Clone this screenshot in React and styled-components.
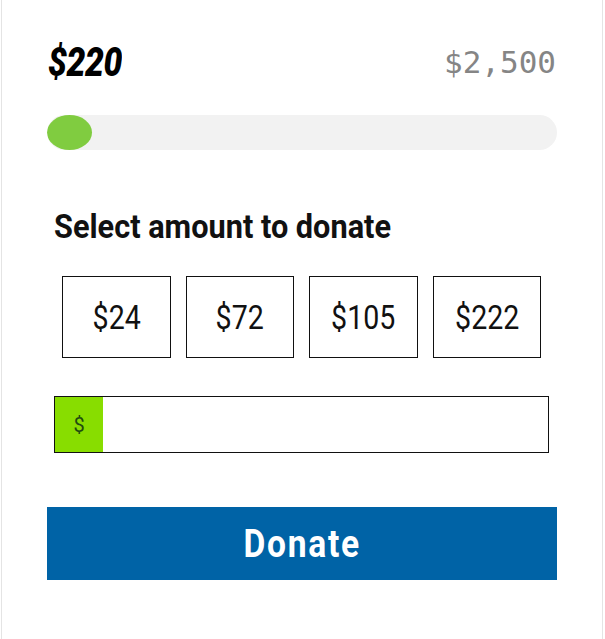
import styled, { createGlobalStyle } from 'styled-components';

const GlobalStyle = createGlobalStyle`
    body{
        margin: 0;
        background: #ffffff;
        font-family: Roboto, "Liberation Sans", sans-serif;
    }
`;

const amounts = [24, 72, 105, 222];

function App() {
    const raised = 220;
    const goal = 2500;
    const pct = Math.max((raised / goal) * 100, 8.8);
    return(
        <>
            <GlobalStyle/>
            <Card>
                <Totals>
                    <Raised>${raised}</Raised>
                    <Goal>$2,500</Goal>
                </Totals>
                <Track>
                    <Fill style={{width: pct + '%'}}/>
                </Track>
                <Heading>Select amount to donate</Heading>
                <Amounts>
                    {amounts.map(a => (
                        <AmountButton key={a}><span>${a}</span></AmountButton>
                    ))}
                </Amounts>
                <CustomField>
                    <Prefix>$</Prefix>
                    <input type='text'/>
                </CustomField>
                <DonateButton><span>Donate</span></DonateButton>
            </Card>
        </>
    )
}
export default App;

const Card = styled.div`
    box-sizing: border-box;
    margin: 0 2px 0 1px;
    min-height: 639px;
    border-left: 1px solid #e4e4e4;
    border-right: 1px solid #e4e4e4;
    padding: 40px 45px 0 45px;
`;

const Totals = styled.div`
    display: flex;
    justify-content: space-between;
    align-items: center;
    height: 44px;
    padding: 0 1px 0 1px;
`;

const Raised = styled.span`
    display: inline-block;
    font-family: Roboto, sans-serif;
    font-weight: 900;
    font-style: italic;
    font-size: 40px;
    letter-spacing: -0.5px;
    color: #000;
    transform: scaleX(0.84);
    transform-origin: left center;
`;

const Goal = styled.span`
    font-family: "DejaVu Sans Mono", "Liberation Mono", monospace;
    font-size: 31px;
    color: #858585;
    letter-spacing: 0;
`;

const Track = styled.div`
    margin-top: 31px;
    height: 35px;
    border-radius: 18px;
    background: #f2f2f2;
    overflow: hidden;
`;

const Fill = styled.div`
    height: 100%;
    border-radius: 50%;
    background: #80cc40;
`;

const Heading = styled.h2`
    margin: 59px 0 0 7px;
    font-family: Roboto, sans-serif;
    font-weight: 700;
    font-size: 33px;
    line-height: 36px;
    color: #111;
    white-space: nowrap;
    transform: scaleX(0.93);
    transform-origin: left center;
`;

const Amounts = styled.div`
    display: grid;
    grid-template-columns: repeat(4, 108.5px);
    gap: 15px;
    margin: 31px 0 0 15px;
`;

const AmountButton = styled.button`
    box-sizing: border-box;
    height: 82px;
    border: 1px solid #111;
    background: #fff;
    padding: 0;
    display: flex;
    align-items: center;
    justify-content: center;
    cursor: pointer;

    span{
        display: inline-block;
        font-family: Roboto, sans-serif;
        font-weight: 400;
        font-size: 34px;
        color: #111;
        transform: scaleX(0.84);
    }
`;

const CustomField = styled.div`
    box-sizing: border-box;
    display: flex;
    margin: 38px 8px 0 7px;
    height: 57px;
    border: 1px solid #111;

    input{
        flex: 1;
        border: none;
        outline: none;
        font-size: 20px;
        padding: 0 12px;
    }
`;

const Prefix = styled.div`
    width: 48px;
    background: #88dd00;
    display: flex;
    align-items: center;
    justify-content: center;
    font-family: Roboto, sans-serif;
    font-size: 20px;
    color: #1f4a10;
`;

const DonateButton = styled.button`
    display: flex;
    align-items: center;
    justify-content: center;
    width: 100%;
    height: 73px;
    margin-top: 54px;
    border: none;
    background: #0063a6;
    cursor: pointer;

    span{
        display: inline-block;
        font-family: Roboto, sans-serif;
        font-weight: 700;
        font-size: 39px;
        letter-spacing: 2px;
        color: #fff;
        transform: scaleX(0.86);
    }
`;
